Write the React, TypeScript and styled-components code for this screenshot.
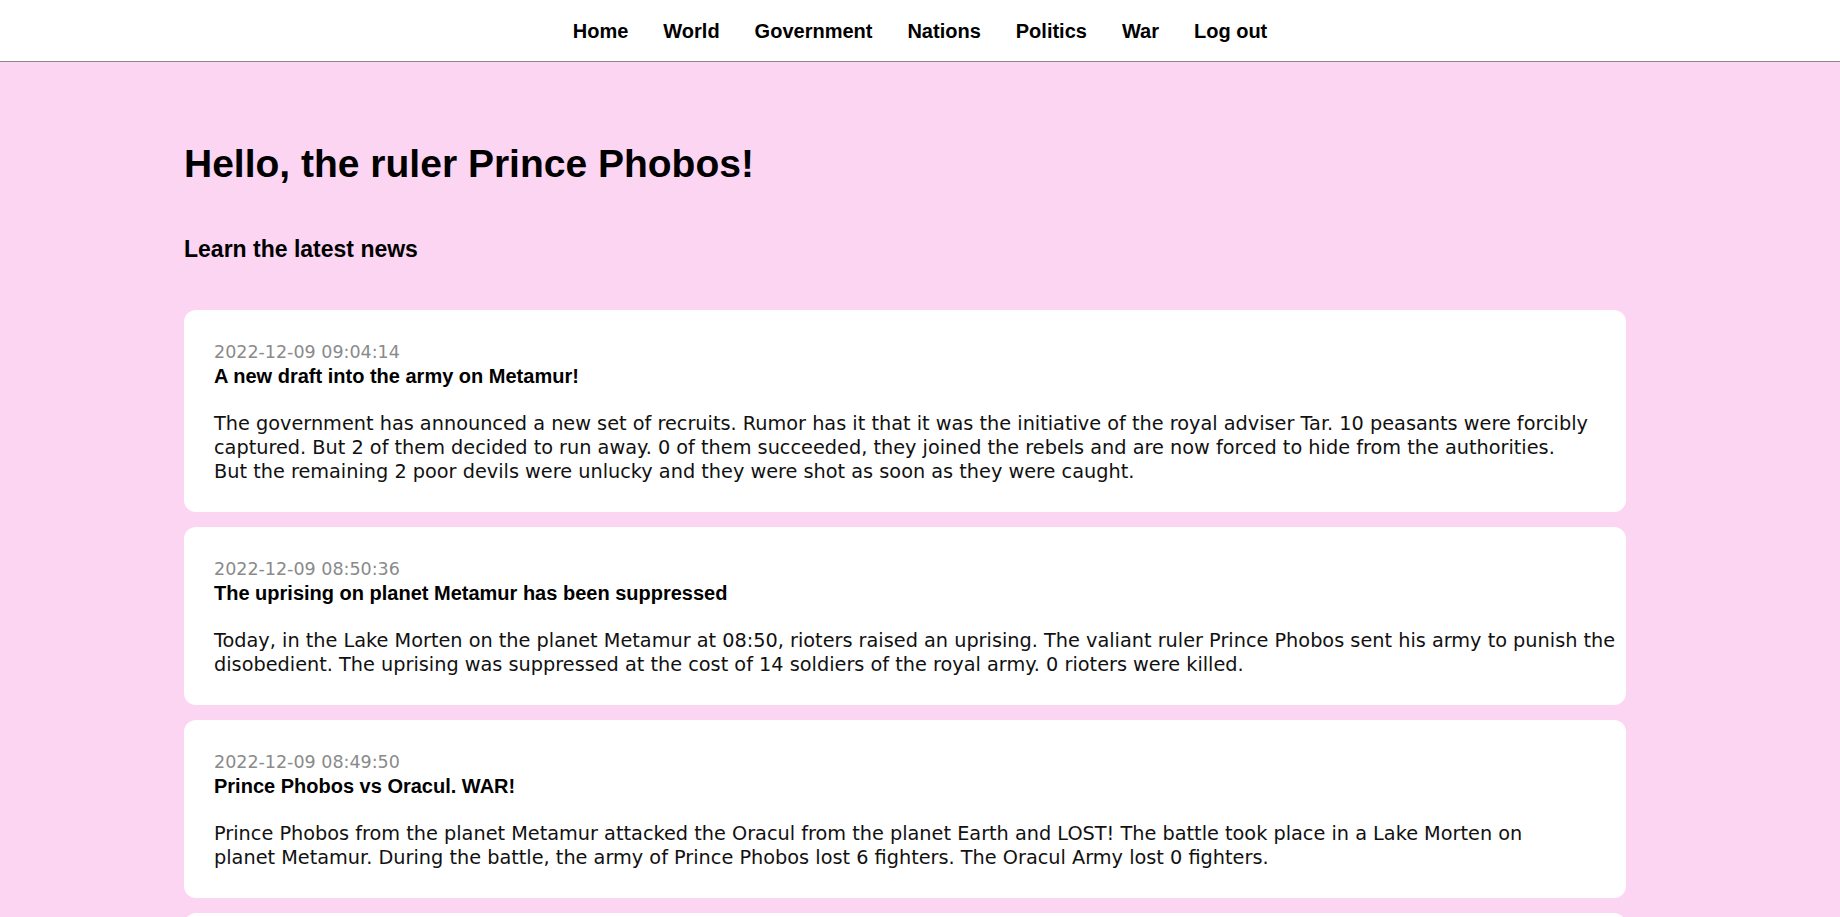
import React from "react";
import styled, { createGlobalStyle } from "styled-components";

const GlobalStyle = createGlobalStyle`
  html, body {
    margin: 0;
    padding: 0;
    background: #fcd5f2;
  }
  body {
    font-family: "DejaVu Sans", "Liberation Sans", sans-serif;
    color: #000;
  }
  * { box-sizing: border-box; }
`;

const Page = styled.div`
  min-height: 100vh;
  background: #fcd5f2;
`;

const Header = styled.header`
  height: 62px;
  background: #ffffff;
  border-bottom: 1px solid #8a8a8a;
  display: flex;
  align-items: center;
  justify-content: center;
`;

const Nav = styled.nav`
  display: flex;
  gap: 35px;
  align-items: center;
`;

const NavLink = styled.a`
  font-family: "Liberation Sans", Arial, sans-serif;
  font-weight: 700;
  font-size: 20px;
  line-height: 24px;
  color: #000;
  text-decoration: none;
  cursor: pointer;
`;

const Main = styled.main`
  padding: 78px 214px 0 184px;
`;

const Title = styled.h1`
  margin: 0;
  font-family: "Liberation Sans", Arial, sans-serif;
  font-weight: 700;
  font-size: 39px;
  line-height: 47px;
`;

const Subtitle = styled.h2`
  margin: 48px 0 47px;
  font-family: "Liberation Sans", Arial, sans-serif;
  font-weight: 700;
  font-size: 23px;
  line-height: 28px;
`;

const NewsList = styled.div`
  display: flex;
  flex-direction: column;
  gap: 15px;
`;

const Card = styled.article`
  background: #ffffff;
  border-radius: 12px;
  padding: 30px 14px 28px 30px;
`;

const DateLine = styled.div`
  font-size: 17.5px;
  line-height: 24px;
  color: #8a8a8a;
`;

const NewsTitle = styled.div`
  font-family: "Liberation Sans", Arial, sans-serif;
  font-weight: 700;
  font-size: 20px;
  line-height: 24px;
  color: #000;
`;

const NewsBody = styled.p`
  margin: 24px 0 0;
  font-size: 19.3px;
  line-height: 24px;
  color: #111;
`;

const BodyLine = styled.span`
  display: block;
  white-space: nowrap;
`;

const navItems = ["Home", "World", "Government", "Nations", "Politics", "War", "Log out"];

type NewsItem = { date: string; title: string; lines: string[] };

const news: NewsItem[] = [
  {
    date: "2022-12-09 09:04:14",
    title: "A new draft into the army on Metamur!",
    lines: [
      "The government has announced a new set of recruits. Rumor has it that it was the initiative of the royal adviser Tar. 10 peasants were forcibly",
      "captured. But 2 of them decided to run away. 0 of them succeeded, they joined the rebels and are now forced to hide from the authorities.",
      "But the remaining 2 poor devils were unlucky and they were shot as soon as they were caught.",
    ],
  },
  {
    date: "2022-12-09 08:50:36",
    title: "The uprising on planet Metamur has been suppressed",
    lines: [
      "Today, in the Lake Morten on the planet Metamur at 08:50, rioters raised an uprising. The valiant ruler Prince Phobos sent his army to punish the",
      "disobedient. The uprising was suppressed at the cost of 14 soldiers of the royal army. 0 rioters were killed.",
    ],
  },
  {
    date: "2022-12-09 08:49:50",
    title: "Prince Phobos vs Oracul. WAR!",
    lines: [
      "Prince Phobos from the planet Metamur attacked the Oracul from the planet Earth and LOST! The battle took place in a Lake Morten on",
      "planet Metamur. During the battle, the army of Prince Phobos lost 6 fighters. The Oracul Army lost 0 fighters.",
    ],
  },
  {
    date: "2022-12-09 08:41:12",
    title: "A new draft into the army on Metamur!",
    lines: [
      "The government has announced a new set of recruits. Rumor has it that it was the initiative of the royal adviser Tar.",
    ],
  },
];

export default function App() {
  return (
    <Page>
      <GlobalStyle />
      <Header>
        <Nav>
          {navItems.map((item) => (
            <NavLink key={item}>{item}</NavLink>
          ))}
        </Nav>
      </Header>
      <Main>
        <Title>Hello, the ruler Prince Phobos!</Title>
        <Subtitle>Learn the latest news</Subtitle>
        <NewsList>
          {news.map((n) => (
            <Card key={n.date}>
              <DateLine>{n.date}</DateLine>
              <NewsTitle>{n.title}</NewsTitle>
              <NewsBody>
                {n.lines.map((line, i) => (
                  <BodyLine key={i}>{line}</BodyLine>
                ))}
              </NewsBody>
            </Card>
          ))}
        </NewsList>
      </Main>
    </Page>
  );
}
